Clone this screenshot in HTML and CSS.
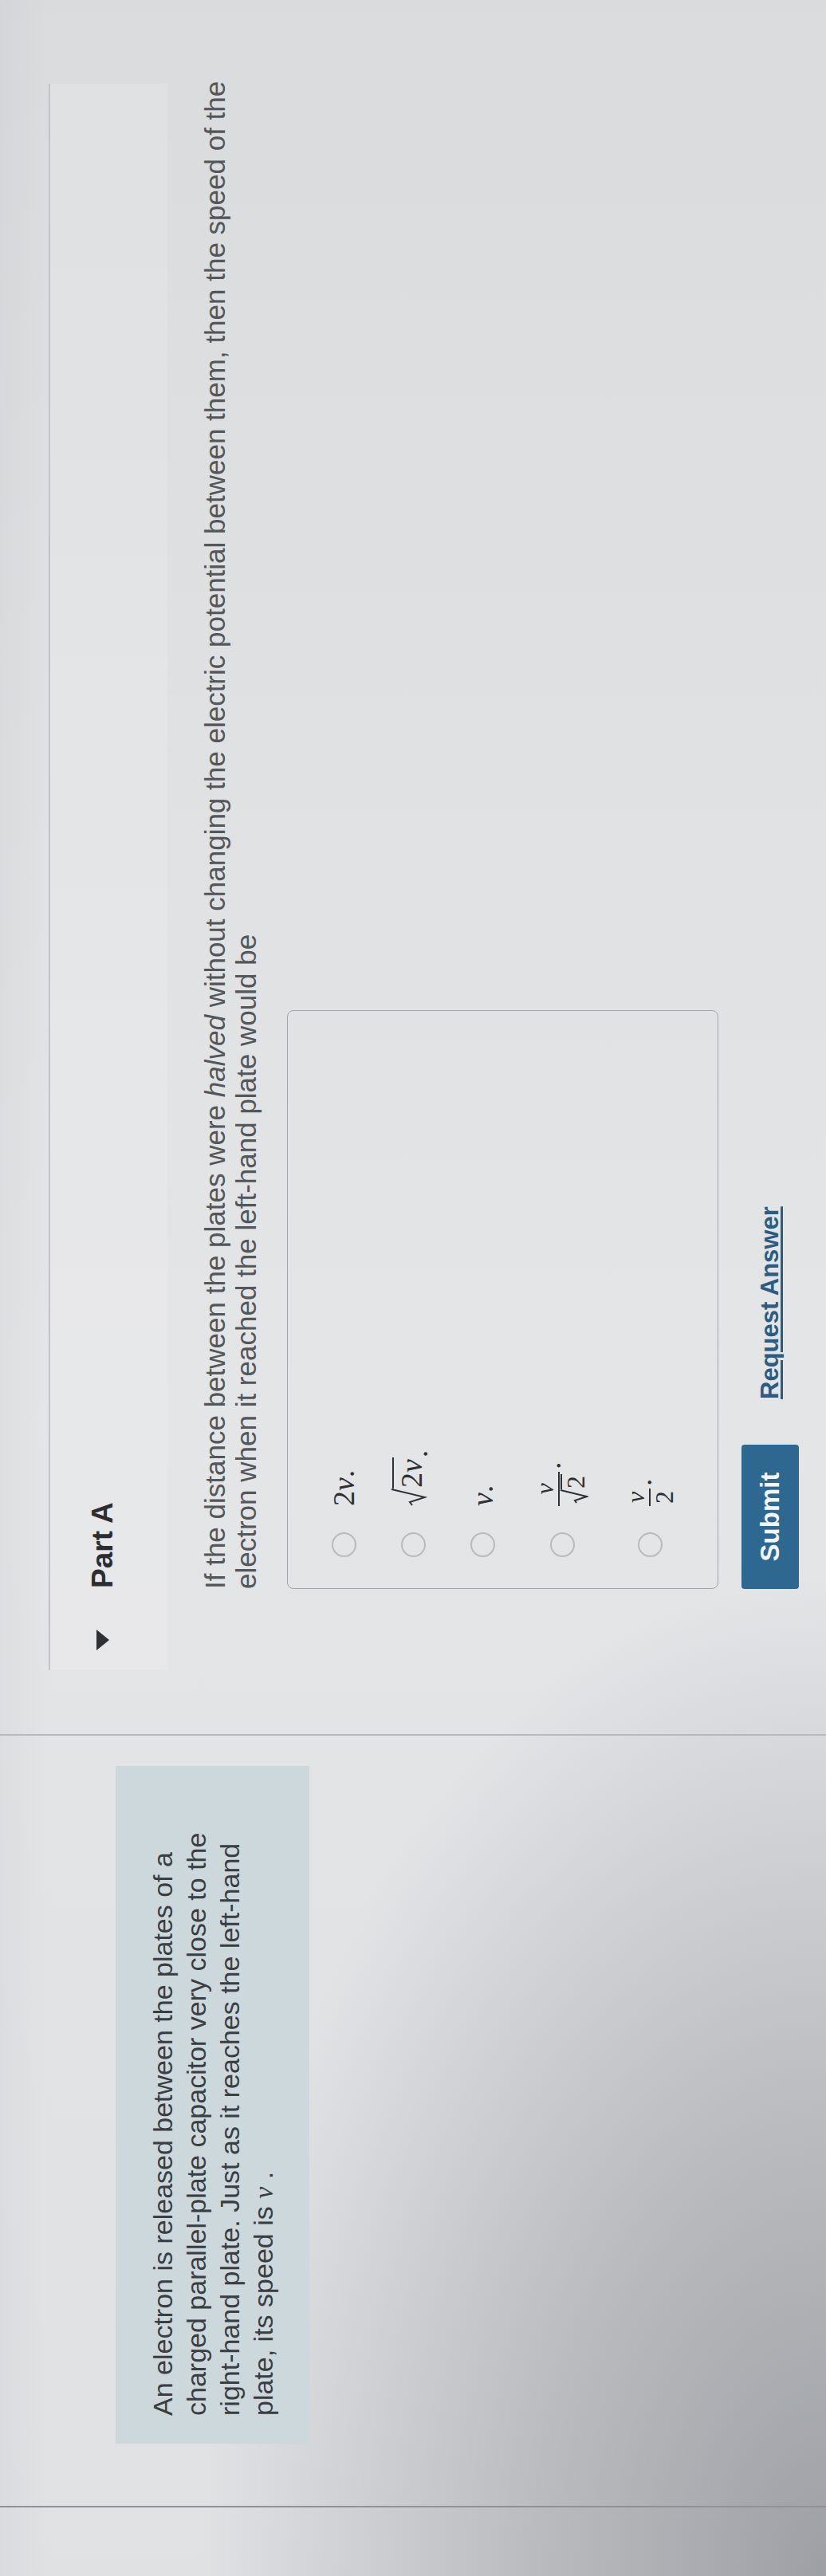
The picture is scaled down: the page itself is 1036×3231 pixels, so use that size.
FILE: index.html
```html
<!DOCTYPE html>
<html lang="en">
<head>
<meta charset="utf-8">
<title>Part A</title>
<link rel="stylesheet" href="styles.css">
</head>
<body>
<div class="photo">
  <div class="screen">
    <div class="gutter"></div>
    <aside class="intro">
      <div class="intro-box">
        <p>An electron is released between the plates of a charged parallel-plate capacitor very close to the right-hand plate. Just as it reaches the left-hand plate, its speed is <i class="mvar">v</i> .</p>
      </div>
    </aside>
    <main class="content">
      <section class="part">
        <header class="part-head">
          <svg class="caret" width="26" height="16" viewBox="0 0 26 16"><polygon points="0,0 26,0 13,16"/></svg>
          <h2>Part A</h2>
        </header>
        <div class="part-body">
          <p class="question">If the distance between the plates were <em>halved</em> without changing the electric potential between them, then the speed of the electron when it reached the left-hand plate would be</p>
          <div class="choices">
            <label class="choice"><span class="radio"></span><span class="math">2<i>v</i>.</span></label>
            <label class="choice"><span class="radio"></span><span class="math"><span class="sqrt"><svg class="radical" width="22" height="46" viewBox="0 0 22 46"><path d="M1 27 L5 24 L11 43 L21 1"/></svg><span class="radicand">2<i>v</i></span></span>.</span></label>
            <label class="choice"><span class="radio"></span><span class="math"><i>v</i>.</span></label>
            <label class="choice tall"><span class="radio"></span><span class="math"><span class="frac"><span class="num"><i>v</i></span><span class="den"><span class="sqrt small"><svg class="radical" width="18" height="36" viewBox="0 0 18 36"><path d="M1 21 L4 19 L9 34 L17 1"/></svg><span class="radicand">2</span></span></span></span>.</span></label>
            <label class="choice tall2"><span class="radio"></span><span class="math"><span class="frac"><span class="num"><i>v</i></span><span class="den">2</span></span>.</span></label>
          </div>
          <div class="actions">
            <button class="submit" type="button">Submit</button>
            <a class="request" href="#">Request Answer</a>
          </div>
        </div>
      </section>
    </main>
  </div>
</div>
</body>
</html>
```
FILE: styles.css
```css
html, body {
  margin: 0;
  padding: 0;
}

body {
  width: 1036px;
  height: 3231px;
  overflow: hidden;
  background: #e1e2e4;
}

.photo {
  width: 1036px;
  height: 3231px;
  overflow: hidden;
  background:
    radial-gradient(ellipse 780px 1250px at 100% 100%, rgba(145, 148, 153, 0.85) 0%, rgba(145, 148, 153, 0.5) 45%, rgba(145, 148, 153, 0) 100%),
    linear-gradient(to right, rgba(120, 124, 128, 0.06) 0px, rgba(120, 124, 128, 0) 60px),
    linear-gradient(to bottom, #d9dbdd 0%, #dfe0e2 25%, #e4e5e7 55%, #dfe1e3 100%);
}

.screen {
  width: 3231px;
  height: 1036px;
  display: flex;
  transform-origin: 0 0;
  transform: translateY(3231px) rotate(-90deg);
  font-family: "Liberation Sans", Arial, sans-serif;
}

.gutter {
  width: 86px;
  flex: none;
  border-right: 2px solid #8e9196;
}

.intro {
  width: 968px;
  flex: none;
  box-sizing: border-box;
  padding: 145px 38px 0 78px;
  border-right: 2px solid #b6babe;
}

.intro-box {
  background: #cdd8dd;
  padding: 38px 35px 36px;
}

.intro-box p {
  margin: 0;
  font-size: 34px;
  line-height: 42px;
  color: #3a3e42;
}

.mvar {
  font-family: "Liberation Serif", "Times New Roman", serif;
  font-style: italic;
}

.content {
  flex: 1;
  min-width: 0;
  padding: 61px 105px 0 80px;
}

.part {
  border-top: 2px solid #c1c5c8;
}

.part-head {
  height: 147px;
  box-sizing: border-box;
  padding: 0 0 16px 25px;
  display: flex;
  align-items: center;
  gap: 52px;
  background: rgba(255, 255, 255, 0.14);
}

.caret {
  fill: #2e3033;
  flex: none;
}

.part-head h2 {
  margin: 0;
  font-size: 37px;
  line-height: 37px;
  font-weight: bold;
  color: #2b2d30;
}

.part-body {
  padding-left: 102px;
}

.question {
  margin: 40px 0 0;
  width: 1950px;
  font-size: 35px;
  line-height: 39px;
  color: #53575b;
}

.choices {
  margin-top: 32px;
  width: 726px;
  box-sizing: border-box;
  border: 1px solid #a2a4a7;
  border-radius: 8px;
  padding: 39px 0 44px 39px;
  display: flex;
  flex-direction: column;
  gap: 25px;
}

.choice {
  height: 62px;
  display: flex;
  align-items: center;
  gap: 33px;
}

.choice.tall {
  height: 88px;
}

.choice.tall2 {
  height: 82px;
}

.radio {
  width: 31px;
  height: 31px;
  flex: none;
  box-sizing: border-box;
  border: 2px solid #b9babc;
  border-radius: 50%;
}

.math {
  font-family: "Liberation Serif", "Times New Roman", serif;
  font-size: 38px;
  line-height: 46px;
  color: #2e3033;
  display: inline-flex;
  align-items: baseline;
}

.math i {
  font-style: italic;
}

.sqrt {
  display: inline-flex;
  align-items: flex-end;
}

.radical {
  flex: none;
  fill: none;
  stroke: #2e3033;
  stroke-width: 2;
  stroke-linejoin: miter;
}

.radicand {
  border-top: 2px solid #2e3033;
  line-height: 40px;
  padding: 2px 2px 0 1px;
}

.sqrt.small .radicand {
  line-height: 32px;
  padding-top: 1px;
}

.frac {
  display: inline-flex;
  flex-direction: column;
  align-items: center;
  font-size: 32px;
  margin-right: 3px;
  align-self: center;
}

.frac .num {
  line-height: 33px;
  padding: 0 3px;
}

.frac .den {
  border-top: 2px solid #2e3033;
  line-height: 34px;
  padding: 0 3px;
}

.actions {
  margin-top: 29px;
  display: flex;
  align-items: center;
  gap: 57px;
}

.submit {
  width: 181px;
  height: 72px;
  background: #2e6790;
  color: #f2f5f7;
  border: 0;
  border-radius: 4px;
  font-family: "Liberation Sans", Arial, sans-serif;
  font-size: 33px;
  font-weight: bold;
  padding: 0;
}

.request {
  font-size: 31px;
  font-weight: bold;
  color: #2d5b81;
  text-decoration: underline;
  text-underline-offset: 3px;
}
```
